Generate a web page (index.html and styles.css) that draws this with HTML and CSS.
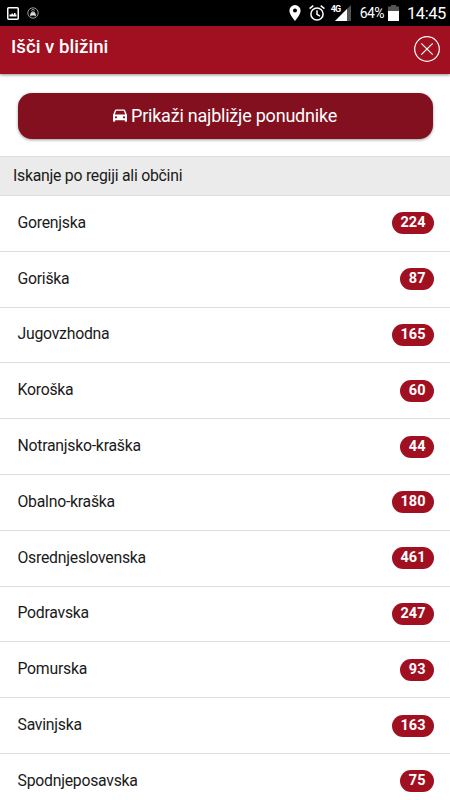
FILE: index.html
```
<!DOCTYPE html>
<html lang="sl">
    <head>
        <meta charset="utf-8">
        <title>Išči v bližini</title>
        <link rel="stylesheet" href="styles.css">
    </head>
    <body>
        <div class="statusbar">
            <div class="status-left">
                <svg class="icon-picture" viewBox="0 0 12 13">
                    <rect x="0.75" y="0.75" width="10.5" height="11.5" rx="1" fill="none" stroke="#fff" stroke-width="1.5"/>
                    <path d="M2.500 9.500V7.500h2V6.500h1.500v1h1V6h1.500v1.500h1v2z" fill="#fff"/>
                </svg>
                <svg class="icon-badge" viewBox="0 0 12 12">
                    <circle cx="6" cy="6" r="5.2" fill="none" stroke="#999" stroke-width="1"/>
                    <circle cx="6" cy="3.600" r="1.3" fill="none" stroke="#aaa" stroke-width="0.8"/>
                    <path d="M3.2 9.2V7.2L4.2 5.3h3.6l1 1.900v2H7.7v-.8H4.3v.8z" fill="#ddd"/>
                </svg>
            </div>
            <div class="status-right">
                <svg class="icon-pin" viewBox="0 0 12 16">
                    <path fill="#fff" fill-rule="evenodd" d="M6 0A5.6 5.6 0 0 0 .4 5.6C.4 9.8 6 16 6 16s5.600-6.200 5.600-10.400A5.600 5.600 0 0 0 6 0zm0 3.600a2 2 0 1 1 0 4 2 2 0 0 1 0-4z"/>
                </svg>
                <svg class="icon-alarm" viewBox="0 0 16 16">
                    <g fill="none" stroke="#fff" stroke-width="1.500">
                        <circle cx="8" cy="9" r="6.100"/>
                        <path d="M.6 3.700L4.300.7M15.400 3.700L11.700.7M8 5.300v4l2.900 1.800"/>
                    </g>
                </svg>
                <div class="signal">
                    <span class="signal-type">4G</span>
                    <svg class="icon-signal" viewBox="0 0 16 16">
                        <path d="M16 0v16H0z" fill="#555"/>
                        <path d="M12 4v12H0z" fill="#fff"/>
                    </svg>
                </div>
                <span class="percent">64%</span>
                <svg class="icon-battery" viewBox="0 0 11 16">
                    <path d="M3 0h5v1.500h3V6H0V1.500h3z" fill="#555"/>
                    <path d="M0 6h11v10H0z" fill="#fff"/>
                </svg>
                <span class="clock">14:45</span>
            </div>
        </div>

        <div class="header">
            <h1>Išči v bližini</h1>
            <svg class="close" viewBox="0 0 26 26">
                <g fill="none" stroke="#fff" stroke-width="1.200">
                    <circle cx="13" cy="13" r="12.300"/>
                    <path d="M7.300 7.300l11.400 11.400M18.700 7.300L7.300 18.700"/>
                </g>
            </svg>
        </div>

        <div class="search">
            <button class="nearest">
                <svg class="icon-car" viewBox="0 0 14 13">
                    <path fill="#fff" fill-rule="evenodd" d="M3 .6h8q.9 0 1.200.9L14 6v6q0 .8-.7.800h-.8q-.7 0-.7-.7v-.8H2.200v.8q0 .7-.7.700H.7Q0 12.800 0 12V6l1.800-4.500Q2.100.6 3 .6zM3.200 1.800L1.800 5.400h10.400l-1.400-3.600zM3 7.200a1.100 1.100 0 1 0 0 2.200 1.100 1.100 0 0 0 0-2.200zm8 0a1.100 1.100 0 1 0 0 2.200 1.100 1.100 0 0 0 0-2.200z"/>
                </svg>
                <span>Prikaži najbližje ponudnike</span>
            </button>
        </div>

        <div class="divider">Iskanje po regiji ali občini</div>
        <div class="list">
            <div class="item"><span>Gorenjska</span><span class="badge">224</span></div>
            <div class="item"><span>Goriška</span><span class="badge">87</span></div>
            <div class="item"><span>Jugovzhodna</span><span class="badge">165</span></div>
            <div class="item"><span>Koroška</span><span class="badge">60</span></div>
            <div class="item"><span>Notranjsko-kraška</span><span class="badge">44</span></div>
            <div class="item"><span>Obalno-kraška</span><span class="badge">180</span></div>
            <div class="item"><span>Osrednjeslovenska</span><span class="badge">461</span></div>
            <div class="item"><span>Podravska</span><span class="badge">247</span></div>
            <div class="item"><span>Pomurska</span><span class="badge">93</span></div>
            <div class="item"><span>Savinjska</span><span class="badge">163</span></div>
            <div class="item"><span>Spodnjeposavska</span><span class="badge">75</span></div>
        </div>
    </body>
</html>
```
FILE: styles.css
```
*
{
    box-sizing: border-box;
}

body
{
    display: flex;
    flex-direction: column;
    height: 800px;
    margin: 0;
    overflow: hidden;
    background-color: #fff;
    color: #1a1a1a;
    font-family: Roboto, "Liberation Sans", sans-serif;
    font-size: 15.8px;
    letter-spacing: -0.25px;
}

svg
{
    display: block;
    flex: none;
}

.statusbar
{
    display: flex;
    flex: none;
    justify-content: space-between;
    height: 26px;
    padding: 0 5px 0 7px;
    background-color: #000;
    color: #fff;
}

.status-left, .status-right
{
    display: flex;
    align-items: center;
}

.icon-picture
{
    width: 12px;
    height: 13px;
}

.icon-badge
{
    width: 12px;
    height: 12px;
    margin-left: 8px;
}

.icon-pin
{
    width: 12px;
    height: 16px;
}

.icon-alarm
{
    width: 16px;
    height: 16px;
    margin-left: 8px;
}

.signal
{
    display: flex;
    align-items: center;
    margin-left: 6px;
}

.signal-type
{
    width: 10px;
    margin-right: -6px;
    padding-bottom: 8px;
    font-size: 9px;
    font-weight: bold;
    letter-spacing: -0.8px;
    line-height: 8px;
}

.icon-signal
{
    width: 16px;
    height: 16px;
}

.percent
{
    margin-left: 9px;
    font-size: 14px;
    letter-spacing: -0.6px;
}

.icon-battery
{
    width: 11px;
    height: 16px;
    margin-left: 4px;
}

.clock
{
    margin-right: -1px;
    margin-left: 8px;
    font-size: 16.5px;
    letter-spacing: -0.4px;
}

.header
{
    display: flex;
    flex: none;
    justify-content: space-between;
    height: 48px;
    padding: 10px 10px 0 11px;
    background-color: #a01020;
    box-shadow: 0 1px 3px rgba(0, 0, 0, 0.45);
    color: #fff;
}

.header h1
{
    margin: 0;
    font-size: 18.7px;
    font-weight: 500;
    letter-spacing: 0;
    line-height: 22px;
}

.close
{
    width: 26px;
    height: 26px;
}

.search
{
    flex: none;
    height: 82px;
    padding: 19px 17px 0 18px;
}

.nearest
{
    display: flex;
    align-items: center;
    justify-content: center;
    width: 100%;
    height: 46px;
    padding: 0 1px 1px 0;
    border: 0;
    border-radius: 14px;
    background-color: #82101e;
    box-shadow: 0 1px 3px rgba(0, 0, 0, 0.4);
    color: #fff;
    font-family: inherit;
    font-size: 18px;
    letter-spacing: -0.22px;
}

.icon-car
{
    width: 14px;
    height: 13px;
    margin-right: 4px;
}

.divider
{
    flex: none;
    height: 40px;
    padding-left: 13px;
    border-top: 1px solid #dedede;
    border-bottom: 1px solid #dedede;
    background-color: #ebebeb;
    line-height: 38px;
}

.item
{
    display: flex;
    align-items: center;
    justify-content: space-between;
    height: 55.8px;
    padding: 0 16px 0 17.5px;
    border-bottom: 1px solid #dedede;
}

.item span:first-child
{
    padding-bottom: 2px;
}

.badge
{
    height: 22px;
    padding: 0 8.5px;
    border-radius: 11px;
    background-color: #a01020;
    color: #fff;
    font-size: 14.5px;
    font-weight: bold;
    letter-spacing: 0;
    line-height: 21px;
}
```
